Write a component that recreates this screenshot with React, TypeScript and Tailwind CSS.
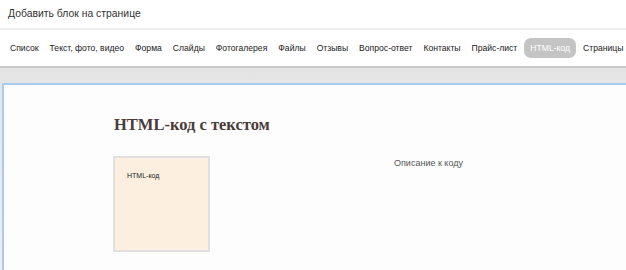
const tabs = [
  'Список',
  'Текст, фото, видео',
  'Форма',
  'Слайды',
  'Фотогалерея',
  'Файлы',
  'Отзывы',
  'Вопрос-ответ',
  'Контакты',
  'Прайс-лист',
  'HTML-код',
  'Страницы',
]

export default function App() {
  return (
    <div className="h-[270px] w-[626px] overflow-hidden bg-white font-['Liberation_Sans',Arial,sans-serif]">
      {/* header */}
      <div className="flex h-[30px] items-center border-b-2 border-[#f0f0f0] px-2 text-[10.4px] text-[#333]">
        Добавить блок на странице
      </div>

      {/* tabs */}
      <div className="flex h-[36px] items-center gap-[1px] whitespace-nowrap pl-[5px] text-[8.6px] text-[#222]">
        {tabs.map((t) =>
          t === 'HTML-код' ? (
            <span key={t} className="mx-[1px] rounded-[7px] bg-[#c4c4c4] px-[6px] py-[4px] text-white">
              {t}
            </span>
          ) : (
            <span key={t} className="px-[5px] py-[4px]">
              {t}
            </span>
          )
        )}
      </div>

      {/* editor area */}
      <div className="border-t-2 border-[#c9c9c9] bg-gradient-to-b from-[#e4e4e4] to-[#efefef] pl-[2px] pt-[15px]">
        <div className="h-[200px] border-l-2 border-t-2 border-[#a8cbee] bg-[#fdfdfd]">
          <h2 className="pl-[110px] pt-[29px] font-['Liberation_Serif',serif] text-[16.5px] leading-[22px] font-bold text-[#4a3b38]">
            HTML-код с текстом
          </h2>
          <div className="mt-[20px] flex">
            <div className="ml-[109px] h-[96px] w-[97px] border-2 border-[#e0e0e0] bg-[#fdefe0] px-[12px] pt-[13px] text-[7px] text-[#222]">
              HTML-код
            </div>
            <div className="ml-[184px] pt-[1px] text-[9px] text-[#555]">Описание к коду</div>
          </div>
        </div>
      </div>
    </div>
  )
}
